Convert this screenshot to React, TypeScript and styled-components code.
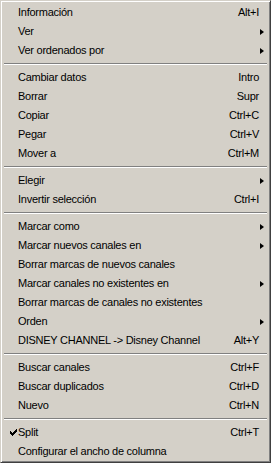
import styled, { createGlobalStyle } from 'styled-components';

const GlobalStyle = createGlobalStyle`
	html, body {
		margin: 0;
		padding: 0;
		background: #d4d0c8;
	}
`;

const MenuBox = styled.div`
	width: 271px;
	height: 463px;
	box-sizing: border-box;
	background: #d4d0c8;
	border: 1px solid;
	border-color: #d4d0c8 #404040 #404040 #d4d0c8;
	box-shadow: inset 1px 1px #ffffff, inset -1px -1px #808080;
	padding: 2px 2px 1px 2px;
	font-family: 'Liberation Sans', Arial, sans-serif;
	font-size: 11px;
	letter-spacing: -0.25px;
	color: #000;
	overflow: hidden;
`;

const Row = styled.div`
	display: flex;
	align-items: center;
	height: 19px;
	line-height: 19px;
	padding: 0 4px 0 0;
	white-space: nowrap;
	cursor: default;
`;

const CheckCell = styled.span`
	width: 15px;
	height: 19px;
	display: flex;
	align-items: center;
	justify-content: flex-end;
	padding-right: 1px;
	box-sizing: border-box;
`;

const Label = styled.span`
	flex: 1;
`;

const Shortcut = styled.span`
	margin-right: 5px;
`;

const Arrow = styled.span`
	width: 0;
	height: 0;
	border-top: 3.5px solid transparent;
	border-bottom: 3.5px solid transparent;
	border-left: 4px solid #000;
`;

const Separator = styled.div`
	height: 8px;
	margin: 0 1px;
	display: flex;
	flex-direction: column;
	justify-content: flex-start;
	padding-top: 3px;
	box-sizing: border-box;

	&::before {
		content: '';
		display: block;
		height: 1px;
		background: #808080;
	}
	&::after {
		content: '';
		display: block;
		height: 1px;
		background: #ffffff;
	}
`;

type Item =
	| { kind: 'sep' }
	| { kind: 'item'; label: string; shortcut?: string; submenu?: boolean; checked?: boolean };

const items: Item[] = [
	{ kind: 'item', label: 'Información', shortcut: 'Alt+I' },
	{ kind: 'item', label: 'Ver', submenu: true },
	{ kind: 'item', label: 'Ver ordenados por', submenu: true },
	{ kind: 'sep' },
	{ kind: 'item', label: 'Cambiar datos', shortcut: 'Intro' },
	{ kind: 'item', label: 'Borrar', shortcut: 'Supr' },
	{ kind: 'item', label: 'Copiar', shortcut: 'Ctrl+C' },
	{ kind: 'item', label: 'Pegar', shortcut: 'Ctrl+V' },
	{ kind: 'item', label: 'Mover a', shortcut: 'Ctrl+M' },
	{ kind: 'sep' },
	{ kind: 'item', label: 'Elegir', submenu: true },
	{ kind: 'item', label: 'Invertir selección', shortcut: 'Ctrl+I' },
	{ kind: 'sep' },
	{ kind: 'item', label: 'Marcar como', submenu: true },
	{ kind: 'item', label: 'Marcar nuevos canales en', submenu: true },
	{ kind: 'item', label: 'Borrar marcas de nuevos canales' },
	{ kind: 'item', label: 'Marcar canales no existentes en', submenu: true },
	{ kind: 'item', label: 'Borrar marcas de canales no existentes' },
	{ kind: 'item', label: 'Orden', submenu: true },
	{ kind: 'item', label: 'DISNEY CHANNEL -> Disney Channel', shortcut: 'Alt+Y' },
	{ kind: 'sep' },
	{ kind: 'item', label: 'Buscar canales', shortcut: 'Ctrl+F' },
	{ kind: 'item', label: 'Buscar duplicados', shortcut: 'Ctrl+D' },
	{ kind: 'item', label: 'Nuevo', shortcut: 'Ctrl+N' },
	{ kind: 'sep' },
	{ kind: 'item', label: 'Split', shortcut: 'Ctrl+T', checked: true },
	{ kind: 'item', label: 'Configurar el ancho de columna' },
];

const CheckMark = () => (
	<svg width="7" height="7" viewBox="0 0 7 7" shapeRendering="crispEdges">
		<path
			d="M0 2h1v1h1v1h1v-1h1v-1h1v-1h1v-1h1v3h-1v1h-1v1h-1v1h-1v1h-1v-1h-1v-1h-1v-1h-1z"
			fill="#000"
		/>
	</svg>
);

const App = () => {
	return (
		<>
			<GlobalStyle />
			<MenuBox>
				{items.map((it, i) =>
					it.kind === 'sep' ? (
						<Separator key={i} />
					) : (
						<Row key={i}>
							<CheckCell>{it.checked && <CheckMark />}</CheckCell>
							<Label>{it.label}</Label>
							{it.shortcut && <Shortcut>{it.shortcut}</Shortcut>}
							{it.submenu && <Arrow />}
						</Row>
					)
				)}
			</MenuBox>
		</>
	);
};

export default App;
